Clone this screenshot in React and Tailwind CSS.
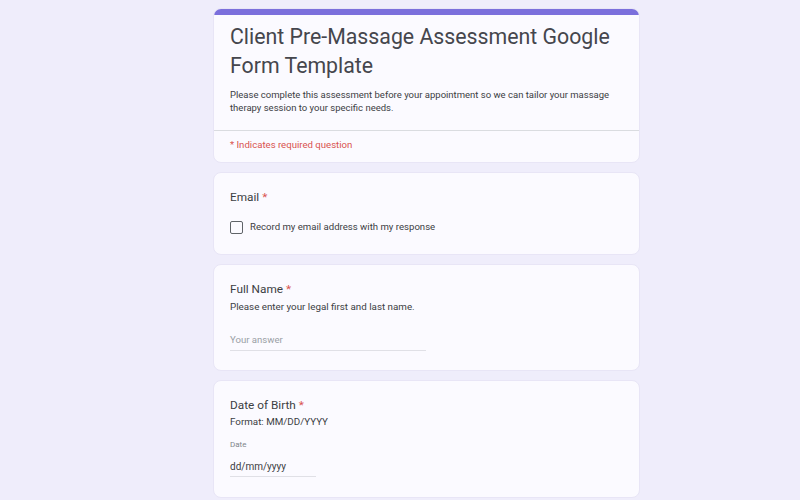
import React from "react";

const Required = () => <span className="text-[#d9534f]"> *</span>;

const Card = ({ children, className = "" }) => (
    <div className={`bg-[#fbfaff] rounded-lg border border-[#e8e5f6] ${className}`}>
        {children}
    </div>
);

const App = () => {
    return (
        <div
            className="min-h-[500px] bg-[#efedfb] pt-2 pl-[213px]"
            style={{ fontFamily: "Roboto, 'Noto Sans', sans-serif" }}
        >
            <div className="w-[427px] flex flex-col gap-[9px]">
                {/* header card */}
                <div className="bg-[#fbfaff] rounded-lg border border-[#e8e5f6] overflow-hidden">
                    <div className="h-[6px] bg-[#7b6fdc]" />
                    <div className="px-4 pt-[7px] pb-[16px]">
                        <h1 className="text-[21.3px] leading-[29px] text-[#45464d]">
                            Client Pre-Massage Assessment Google Form Template
                        </h1>
                        <p className="mt-[8px] text-[9.5px] leading-[13px] text-[#3c4043]">
                            Please complete this assessment before your appointment so we can tailor
                            your massage therapy session to your specific needs.
                        </p>
                    </div>
                    <div className="border-t border-[#dadce0] px-4 pt-[7px] pb-[10px] text-[9.6px] text-[#d9534f]">
                        * Indicates required question
                    </div>
                </div>

                {/* email */}
                <Card className="px-4 pt-[16px] pb-[19px]">
                    <div className="text-[11.8px] leading-[17px] text-[#3c4043]">
                        Email<Required />
                    </div>
                    <label className="mt-[14px] flex items-center gap-[7px]">
                        <span className="w-[13px] h-[13px] rounded-[2px] border-[1.5px] border-[#5f6368]" />
                        <span className="text-[9.6px] text-[#3c4043]">
                            Record my email address with my response
                        </span>
                    </label>
                </Card>

                {/* full name */}
                <Card className="px-4 pt-[16px] pb-[19px]">
                    <div className="text-[11.8px] leading-[17px] text-[#3c4043]">
                        Full Name<Required />
                    </div>
                    <div className="mt-[2px] text-[9.8px] leading-[14px] text-[#3c4043]">
                        Please enter your legal first and last name.
                    </div>
                    <div className="mt-[19px] w-[196px] border-b border-[#e0e0e6] pb-[3px] text-[9.6px] text-[#9aa0a6]">
                        Your answer
                    </div>
                </Card>

                {/* date of birth */}
                <Card className="px-4 pt-[16px] pb-[20px]">
                    <div className="text-[11.8px] leading-[17px] text-[#3c4043]">
                        Date of Birth<Required />
                    </div>
                    <div className="mt-[1px] text-[9.8px] leading-[14px] text-[#3c4043]">
                        Format: MM/DD/YYYY
                    </div>
                    <div className="mt-[10px] text-[8px] text-[#80868b]">Date</div>
                    <div className="mt-[8px] w-[86px] border-b border-[#e0e0e6] pb-[2px] text-[10px] text-[#3c4043]">
                        dd/mm/yyyy
                    </div>
                </Card>
            </div>
        </div>
    );
};

export default App;
